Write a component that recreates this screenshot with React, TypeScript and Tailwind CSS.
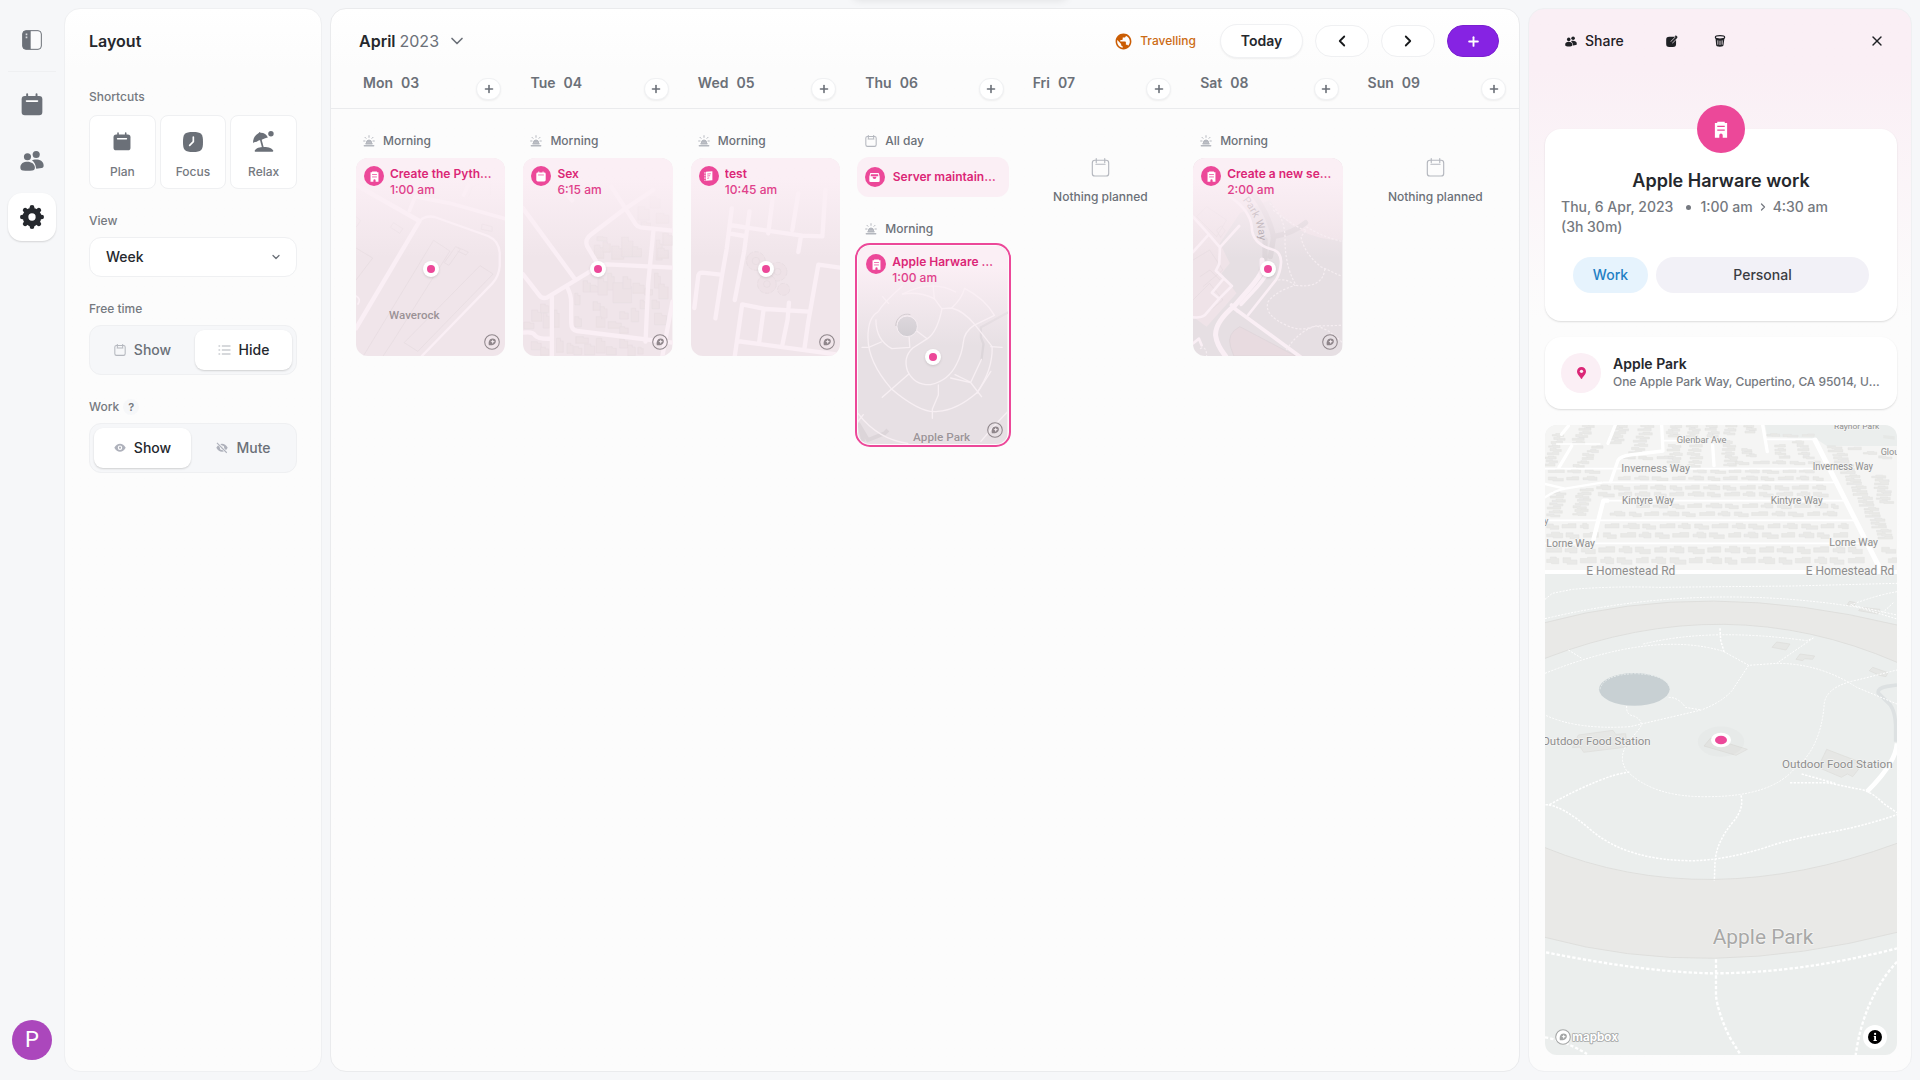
import type { ReactNode, SVGProps } from "react";
import { ChevronDown, ChevronLeft, ChevronRight, Plus, X } from "lucide-react";
import { MdPublic } from "react-icons/md";

type IconProps = SVGProps<SVGSVGElement>;

function CalendarSolid({ notch = "#fff", ...p }: IconProps & { notch?: string }) {
  return (
    <svg viewBox="62 279 68 69" fill="currentColor" {...p}>
      <rect x="64" y="287" width="64" height="60" rx="10" />
      <path d="M81 282v8M110 282v8" stroke="currentColor" strokeWidth="6" strokeLinecap="round" />
      <path d="M79 303h34" stroke={notch} strokeWidth="5" strokeLinecap="round" />
    </svg>
  );
}

function CalendarOutline({ thin = false, ...p }: IconProps & { thin?: boolean }) {
  return (
    <svg viewBox="152 471 56 58" fill="none" stroke="currentColor" strokeWidth={thin ? 5 : 3.5} strokeLinecap="round" {...p}>
      <rect x="155" y="478" width="50" height="48" rx="8" />
      <path d="M167 473v12M193 473v12M166 490h28" />
    </svg>
  );
}

function PeopleIcon(p: IconProps) {
  return (
    <svg viewBox="59 448 74 68" fill="currentColor" {...p}>
      <circle cx="82" cy="469" r="11" />
      <circle cx="109" cy="462" r="11" />
      <path d="M60 502c0-13 10-18 22-18s23 7 23 18c0 7-3 8-8 9-9 2-20 2-29 0-5-1-8-2-8-9z" />
      <path d="M96 480c7-4 36-6 36 17 0 4-2 6-6 7l-17 2c-2-14-6-20-13-26z" />
    </svg>
  );
}

function GearIcon(p: IconProps) {
  return (
    <svg viewBox="-36 -36 72 72" {...p}>
      {[0, 45, 90, 135].map((a) => (
        <line key={a} x1="-29" y1="0" x2="29" y2="0" transform={`rotate(${a})`} stroke="currentColor" strokeWidth="14" strokeLinecap="round" />
      ))}
      <circle r="28" fill="currentColor" />
      <circle r="11" fill="#fff" />
    </svg>
  );
}

function SidebarIcon(p: IconProps) {
  return (
    <svg viewBox="66 90 60 60" {...p}>
      <rect x="68" y="92" width="56" height="56" rx="10" fill="#fbfbfc" stroke="#6b7078" strokeWidth="3" />
      <path d="M78 92h14v56H78a10 10 0 0 1-10-10V102a10 10 0 0 1 10-10z" fill="#6b7078" />
      <path d="M77 103h5M77 112h5" stroke="#d9dbde" strokeWidth="5" />
    </svg>
  );
}

function FocusIcon(p: IconProps) {
  return (
    <svg viewBox="549 396 60 60" {...p}>
      <path d="M579 396c25 0 30 5 30 30s-5 30-30 30-30-5-30-30 5-30 30-30z" fill="currentColor" />
      <path d="M580 411v14l-11 11" fill="none" stroke="#fff" strokeWidth="5" strokeLinecap="round" />
    </svg>
  );
}

function BeachIcon(p: IconProps) {
  return (
    <svg viewBox="762 395 62 62" fill="currentColor" {...p}>
      <circle cx="815" cy="403" r="8" />
      <path d="M762 431c0-16 8-25 17-30l2-3 4 2c10 0 17 6 21 14-5 0-7 3-10 3l-12 5c-6 0-8 2-11 5-5 0-8 1-11 4z" />
      <path d="M784 417l7 26" stroke="currentColor" strokeWidth="5" />
      <path d="M767 453c4-8 15-11 27-11 15 0 25 4 28 11 0 2-1 3-3 3h-49c-2 0-4-1-3-3z" />
    </svg>
  );
}

function SunriseIcon(p: IconProps) {
  return (
    <svg viewBox="99 404 36 36" stroke="currentColor" strokeWidth="3" strokeLinecap="round" fill="currentColor" {...p}>
      <path d="M109 427a8 8 0 0 1 16 0z" />
      <path d="M108 430h18M103 436h28" strokeWidth="4.500" />
      <path d="M117 406v5M105 411l3 3M129 411l-3 3M101 422h4M129 422h4" />
    </svg>
  );
}

function BuildingIcon({ line = "#ec4899", ...p }: IconProps & { line?: string }) {
  return (
    <svg viewBox="583 362 40 50" {...p}>
      <path d="M585 368h7v-4h22v4h7v43h-13v-7a5 5 0 0 0-10 0v7h-13z" fill="#fff" />
      <path d="M592 378h22M592 389h22" stroke={line} strokeWidth="3.500" />
    </svg>
  );
}

function NoteIcon(p: IconProps) {
  return (
    <svg viewBox="1120 510 34 36" {...p}>
      <path d="M1129 515l20-2v28l-20 2z" fill="#fff" />
      <path d="M1126 516v27" stroke="#fff" strokeWidth="3" strokeDasharray="5 3" />
      <path d="M1133 522l11-1M1133 528l9-1M1133 535l6-1" stroke="#ec4899" strokeWidth="2.500" />
    </svg>
  );
}

function InboxIcon(p: IconProps) {
  return (
    <svg viewBox="88 245 34 34" {...p}>
      <path d="M92 248h26l3 12v12a4 4 0 0 1-4 4H93a4 4 0 0 1-4-4v-12z" fill="#fff" />
      <path d="M94 252h22l1 6H93z" fill="#ec4899" />
      <path d="M99 260a6 7 0 0 0 12 0z" fill="#ec4899" />
    </svg>
  );
}

function EyeIcon({ off = false, ...p }: IconProps & { off?: boolean }) {
  return (
    <svg viewBox="341 728 38 34" {...p}>
      <path d="M342 744c9-17 27-17 36 0-9 17-27 17-36 0z" fill="currentColor" />
      <circle cx="360" cy="744" r="7" fill="#fff" />
      <circle cx="360" cy="744" r="3.500" fill="currentColor" />
      {off && (
        <>
          <path d="M348 731l28 30" stroke="#f6f7f9" strokeWidth="8" />
          <path d="M344 729l31 31" stroke="currentColor" strokeWidth="3.500" />
        </>
      )}
    </svg>
  );
}

function ListIcon(p: IconProps) {
  return (
    <svg viewBox="653 432 38 36" stroke="currentColor" strokeWidth="3.500" {...p}>
      <path d="M654 438h5M664 438h26M654 450h5M664 450h26M654 462h5M664 462h26" />
    </svg>
  );
}

function EditIcon(p: IconProps) {
  return (
    <svg viewBox="440 106 33 34" {...p}>
      <path d="M449 111h19v20c0 7-2 9-9 9h-10c-7 0-9-2-9-9v-11c0-7 2-9 9-9z" fill="#1f2125" />
      <path d="M455 127l14-14" stroke="#faeff5" strokeWidth="8" />
      <path d="M454 128l16-16" stroke="#1f2125" strokeWidth="5" />
      <path d="M466 108l5 5" stroke="#1f2125" strokeWidth="4" />
    </svg>
  );
}

function TrashIcon(p: IconProps) {
  return (
    <svg viewBox="584 105 33 36" {...p}>
      <path d="M587 113h27l-3 22c0 3-3 5-11 5s-11-2-11-5z" fill="#1f2125" />
      <ellipse cx="600.500" cy="112" rx="14" ry="5" fill="#faeff5" stroke="#1f2125" strokeWidth="3.500" />
      <path d="M594 121v13M600.500 122v13M607 121v13" stroke="#faeff5" strokeWidth="2.500" />
    </svg>
  );
}

function MapboxMark({ color = "#8f868b", fill = "none", ...p }: IconProps & { color?: string; fill?: string }) {
  return (
    <svg viewBox="0 0 46 46" fill="none" {...p}>
      <circle cx="23" cy="23" r="21" fill={fill} stroke={color} strokeWidth="3" />
      <path d="M14 32c-2-9 1-19 11-19 9 0 12 9 6 15-4 4-10 5-17 4z" fill={color} />
      <path d="M25 15.500l2 4.500 4.500 2-4.500 2-2 4.500-2-4.500-4.500-2 4.500-2z" fill={fill === "none" ? "#f3eaee" : fill} />
    </svg>
  );
}

const road = "#faeff5";
const hair = "#e6dbe0";

function WaverockMap() {
  return (
    <svg viewBox="78 474 447 594" preserveAspectRatio="none" className="block h-full w-full" fill="none">
      <rect x="78" y="474" width="447" height="594" fill="#f0e5ea" />
      <g stroke={hair} strokeWidth="2">
        <path d="M310 721l49 32-170 270-30 45M310 721L100 1068" />
        <path d="M449 797l39 25-225 232-41-26z" />
        <path d="M376 740l14 8-34 48-14-8zM382 742l32 14-7 9-26-12M190 668l28 18-9 14-28-18zM455 672l30 8v14l-32-6zM78 744l50 30-50 66M78 650l14 12-14 20" />
        <path d="M415 590l12-30 18-6M480 545v40" />
      </g>
      <g stroke={road} strokeLinecap="round" strokeLinejoin="round">
        <path d="M78 555l190 108L78 985" strokeWidth="13" />
        <path d="M238 632l17-42 105 20 165 46" strokeWidth="11" />
        <path d="M400 585l14-30" strokeWidth="11" />
        <path d="M268 663q18-18 45-12l160 57q32 14 35 50v40q-3 32-22 52L275 1068" strokeWidth="7" />
        <path d="M78 888q16 8 6 24" strokeWidth="5" />
      </g>
      <text x="177" y="957" fontSize="33" textLength="151" lengthAdjust="spacingAndGlyphs" fontFamily="Roboto, sans-serif" fontWeight="500" fill="#9b9296">
        Waverock
      </text>
    </svg>
  );
}

function TuesdayMap() {
  const blocks = [
    [802, 710, 30, 12], [794, 735, 28, 40], [820, 725, 22, 32], [846, 738, 36, 40], [876, 712, 34, 58], [908, 740, 28, 30], [925, 620, 34, 40],
    [962, 590, 30, 34], [980, 640, 38, 30], [935, 665, 28, 20], [1000, 700, 28, 36], [980, 720, 18, 60], [985, 745, 32, 30], [760, 842, 22, 34],
    [782, 856, 28, 20], [805, 835, 28, 50], [834, 820, 20, 50], [850, 848, 56, 60], [880, 830, 24, 36], [910, 850, 34, 30], [735, 880, 16, 34],
    [790, 905, 22, 26], [812, 920, 20, 34], [870, 935, 26, 22], [905, 925, 22, 40], [932, 900, 16, 26], [945, 865, 24, 20], [975, 820, 18, 44],
    [988, 852, 28, 44], [968, 900, 22, 26], [975, 940, 36, 34], [800, 950, 26, 32], [835, 965, 40, 20], [735, 950, 20, 30], [870, 980, 26, 20],
    [605, 930, 30, 34], [632, 912, 24, 26], [640, 940, 18, 44], [582, 966, 30, 20], [672, 930, 16, 52], [604, 1025, 30, 24], [632, 1042, 24, 24],
    [680, 1015, 20, 42], [712, 1030, 18, 30], [738, 1010, 38, 20], [732, 1040, 24, 24], [765, 1032, 30, 32], [800, 1015, 26, 44], [830, 1040, 30, 24],
    [870, 1018, 24, 26], [895, 1035, 22, 32], [925, 1042, 16, 20],
  ];
  return (
    <svg viewBox="579 474 450 594" preserveAspectRatio="none" className="block h-full w-full" fill="none">
      <rect x="579" y="474" width="450" height="594" fill="#f0e5ea" />
      <g fill="#ede2e6" stroke="#e8dee2" strokeWidth="2">
        {blocks.map(([x, y, w, h], i) => (
          <path key={i} d={`M${x} ${y}h${w * 0.6}v${h * 0.2}h${w * 0.4}v${h * 0.8}h${-w}z`} />
        ))}
      </g>
      <g stroke={road} strokeWidth="13" strokeLinecap="round" strokeLinejoin="round">
        <path d="M579 625l154 209M579 823l50 64q8 10 22 6l152-92q10-8 30-8l196 10" />
        <path d="M803 790l-30-50q-10-20 10-36l98-74 90-60M845 560l74 114q4 6 14 8l96 10M972 690l-16 160-8 175" />
        <path d="M710 858q14 24 14 50v60q0 22 18 25l287 35M1029 905l-26 140-4 23M666 890v178M579 998q30-4 36 8 10 12 50 10M705 575l22 26" />
      </g>
    </svg>
  );
}

function WednesdayMap() {
  return (
    <svg viewBox="1083 474 447 594" preserveAspectRatio="none" className="block h-full w-full" fill="none">
      <rect x="1083" y="474" width="447" height="594" fill="#f0e5ea" />
      <g stroke={hair} strokeWidth="2" fill="#eee2e7">
        {[[1277, 783], [1342, 815], [1310, 852], [1360, 868]].map(([x, y], i) => (
          <circle key={i} cx={x} cy={y} r={i === 3 ? 18 : 28} strokeDasharray="14 4" />
        ))}
        <circle cx="1277" cy="783" r="11" />
        <circle cx="1310" cy="852" r="10" />
        <circle cx="1342" cy="815" r="10" />
      </g>
      <g stroke={road} strokeWidth="13" strokeLinecap="round" strokeLinejoin="round">
        <path d="M1205 625l-15 120-14 80-20 130M1258 634l-16 120-28 146M1200 675l50 8 166 24 60 2 9-139M1197 700l45 8M1328 590l-14 110M1404 580l-18 110M1412 708l-8 48" />
        <path d="M1093 924l12-98q2-8 12-8l55 6M1530 803l-66-9-30 170-12 84M1214 1068l22-155 70 14 130 8M1300 930l-13 96M1376 908l-4 50-16 78M1220 1023l310 42" />
      </g>
    </svg>
  );
}

function AppleParkMap() {
  return (
    <svg viewBox="54 468 450 594" preserveAspectRatio="none" className="block h-full w-full" fill="none">
      <rect x="54" y="468" width="450" height="594" fill="#e7e0e4" />
      <path d="M504 668l-80 44v30l8 20-6 46" stroke="#dcd6da" strokeWidth="7" strokeLinecap="round" />
      <path d="M54 1000l30 50 50-20 10-10M60 1010l10 45" stroke="#dcd5d9" strokeWidth="12" />
      <g stroke="#f7eff3" strokeWidth="4" strokeLinecap="round" strokeLinejoin="round">
        <path d="M188 612q50-8 96 14l22 30 30-2q38 10 70 50l52 66q2 70-46 138-60 52-118 56-50 8-140-68-70-80-70-154 0-60 30-76 18-30 74-78" />
        <path d="M188 612q90-46 160-6M375 595q60 30 90 81l-62 30q-30 20-32 52-4 34-20 64-24 50-78 62-50 2-70-42-14-40 16-68l44-28q30-20 44-90M375 595q-8 30-38 58M280 585l4 42M128 620l18 20" />
        <path d="M108 690q0 60 48 86l54-4-2-30M66 772h20l38-16M262 746l-30-22M207 852l-80 70M296 885v30l-18 42v28M346 854l46 22 34 44M333 864l60 14 33-70M412 910l42-66M454 770l34 2" />
        <path d="M54 970q60 78 150 90M504 966q-30 30-80 88M70 974l-16 20" />
      </g>
      <circle cx="202" cy="709" r="31" fill="#ccc9ce" stroke="#f4edf1" strokeWidth="3" />
      <path d="M168 708a34 34 0 0 1 44-34" stroke="#bdb8bc" strokeWidth="3" />
      <text x="220" y="1053" fontSize="34" textLength="172" lengthAdjust="spacingAndGlyphs" fontFamily="Roboto, sans-serif" fontWeight="500" fill="#9c9599" stroke="#efe8ec" strokeWidth="2" paintOrder="stroke">
        Apple Park
      </text>
    </svg>
  );
}

function ParkWayMap() {
  return (
    <svg viewBox="459 474 450 594" preserveAspectRatio="none" className="block h-full w-full" fill="none">
      <rect x="459" y="474" width="450" height="594" fill="#e6dfe3" />
      <path d="M459 474H909V720Q760 720 690 600L600 640 540 730 570 790 545 820 590 880 500 980 459 950z" fill="#efe3e8" />
      <path d="M600 980q-40 20-28 60l10 28h186z" fill="#e8dbe0" stroke="#ddd3d8" strokeWidth="2" />
      <g stroke={hair} strokeWidth="2">
        <path d="M470 650l30-30 60 40-30 50zM459 780l50-30 40 60-60 50M480 830l30-20 30 30M459 900l50-50 40 50-60 50M530 690l14-12 12 14-14 20z" />
      </g>
      <g stroke="#dcd5d9" strokeWidth="16" strokeLinecap="round" strokeLinejoin="round">
        <path d="M620 560q60 60 82 150l-10 60M676 720v55M700 710q60-10 98-42" />
      </g>
      <g stroke={road} strokeLinecap="round" strokeLinejoin="round">
        <path d="M570 590q60 40 66 90 0 50 60 68 30 8 28 40-2 30-14 50L625 945" strokeWidth="8" />
        <path d="M667 780v30q-6 20-40 58l-42 48q-60 50-58 90 4 30 30 62" strokeWidth="15" />
        <path d="M692 795q-8 30-40 66l-48 52M583 925l200 146M575 915l18 18" strokeWidth="11" />
        <path d="M459 650l45 50 36 42 58-64M540 742l-2 50-10 20 48 46-38 38-22-18 32-38M504 706l-45 50M538 896l-44 50q-10 8-35 6" strokeWidth="8" />
        <path d="M459 1030l18-14 8 20" strokeWidth="8" />
      </g>
      <g stroke="#f5edf1" strokeWidth="3.500" strokeDasharray="7 5">
        <path d="M690 610q50 40 46 120 4 80 34 126 80 10 86-50M700 630q80 60 100 60l-16 20q10 50 60 90l65 30M800 680q60 36 109 44M715 840q30-4 50 16-60 20-80 50-14 40 60 72 40 18 80 0l84-2M740 1050q40-60 90-72 40 10 79 50M480 1046q20-10 20 22" />
      </g>
      <path id="park-way" d="M608 600C636 636 662 676 658 735" />
      <text fontSize="31" fontFamily="Roboto, sans-serif" fill="#9c9398" textLength="134">
        <textPath href="#park-way" textLength="134">Park Way</textPath>
      </text>
    </svg>
  );
}

const houseRows: [number, number, number, number][] = [
  [143, 310, 460, 10], [158, 645, 910, 10], [184, 85, 255, 11], [184, 520, 910, 11], [206, 85, 245, 12], [205, 295, 910, 12],
  [233, 230, 930, 14], [253, 235, 950, 14], [288, 350, 955, 14], [312, 270, 980, 14], [349, 80, 205, 16], [349, 255, 985, 16],
  [376, 80, 235, 17], [376, 250, 1000, 17], [420, 80, 1035, 20], [452, 80, 1035, 20], [420, 1085, 1130, 18], [452, 1105, 1130, 18], [76, 740, 890, 8],
];

const houseStacks: [number, number, number, number, number][] = [
  [118, 75, 88, 165, 34], [205, 48, 172, 98, 36], [228, 112, 180, 168, 34], [306, 48, 284, 98, 40], [382, 48, 350, 128, 40],
  [464, 50, 458, 78, 34], [520, 48, 520, 78, 34], [575, 48, 578, 78, 34], [630, 48, 632, 70, 34], [690, 48, 690, 66, 30],
  [464, 108, 464, 168, 38], [524, 108, 526, 168, 38], [622, 96, 634, 164, 38], [680, 120, 690, 136, 30], [776, 108, 790, 142, 32],
  [838, 96, 862, 142, 34], [944, 112, 1100, 384, 44], [1000, 116, 1100, 142, 40], [1080, 200, 1096, 276, 42], [118, 250, 100, 316, 40], [196, 240, 178, 312, 40],
];

function house(x: number, y: number, w: number, h: number, k: number) {
  const a = h * 0.35;
  const top = y - h / 2;
  if (k % 3 === 0) return `M${x} ${top + a}h${w * 0.3}v${-a}h${w * 0.5}v${a * 0.6}h${w * 0.2}v${h - a * 0.6}h${-w * 0.6}v${-a * 0.5}h${-w * 0.4}z`;
  if (k % 3 === 1) return `M${x} ${top}h${w * 0.55}v${a}h${w * 0.45}v${h - a}h${-w * 0.7}v${-a * 0.7}h${-w * 0.3}z`;
  return `M${x} ${top + a * 0.5}h${w * 0.45}v${-a * 0.5}h${w * 0.55}v${h - a * 0.5}h${-w}z`;
}

function DetailMap() {
  const paths: string[] = [];
  houseRows.forEach(([y, x0, x1, h], r) => {
    let x = x0;
    let k = r;
    while (x < x1 - 20) {
      const w = 36 + ((k * 7) % 5) * 3;
      paths.push(house(x, y + ((k * 5) % 3) - 1, Math.min(w, x1 - x), h, k));
      x += w + 10 + (k % 2) * 3;
      k += 1;
    }
  });
  houseStacks.forEach(([x0, y0, x1, y1, w], r) => {
    const n = Math.max(2, Math.round((y1 - y0) / 11));
    for (let i = 0; i <= n; i++) {
      const t = i / n;
      const shift = ((i * 5 + r) % 3) * 4 - 4;
      paths.push(house(x0 + (x1 - x0) * t - w / 2 + shift, y0 + (y1 - y0) * t, w, 9, i + r));
    }
  });
  const labels: [string, number, number, number, number][] = [
    ["Raynor Park", 942, 57, 136, 23], ["Glenbar Ave", 470, 100, 149, 28], ["Glou", 1082, 135, 56, 28], ["Inverness Way", 304, 185, 206, 33],
    ["Inverness Way", 878, 180, 181, 31], ["Kintyre Way", 306, 282, 156, 31], ["Kintyre Way", 752, 282, 156, 31], ["Lorne Way", 79, 411, 146, 32],
    ["Lorne Way", 928, 408, 146, 32], ["E Homestead Rd", 199, 496, 267, 39], ["E Homestead Rd", 857, 494, 266, 39],
    ["Outdoor Food Station", 66, 1005, 326, 35], ["Outdoor Food Station", 786, 1075, 332, 35],
  ];
  return (
    <svg viewBox="75 45 1056 1890" preserveAspectRatio="none" className="block h-full w-full" fill="none">
      <rect x="75" y="45" width="1056" height="1890" fill="#ebeeed" />
      <path d="M75 45H735L742 80 885 84 920 108H1131V485H75z" fill="#f5f5f4" />
      <path d={paths.join("")} fill="#e9e9e7" stroke="#e2e2e0" strokeWidth="1.500" />
      <path d="M1090 75l34 4v10l-34-4z" fill="#e6e8e6" />
      <g stroke="#fff" strokeLinecap="round" strokeLinejoin="round">
        <path d="M75 176H920M250 217H940M250 272H968M75 331H1000M75 400H1040M740 88h145M110 102h130M430 92h50" strokeWidth="5" />
        <path d="M75 222l60 14 110-18M75 262q30-20 60-26" strokeWidth="7" />
        <path d="M145 48l-20 25M155 108l-38 64M286 45l-22 55M425 45l4 78-100 12q-28 4-35 16l-22 64M578 105l4 62M728 45l14 80" strokeWidth="10" />
        <path d="M262 272h-12l-30 118" strokeWidth="13" />
        <path d="M885 90l194 384" strokeWidth="15" />
        <path d="M75 486H1131" strokeWidth="12" />
      </g>
      <path d="M75 638Q560 505 1131 645V757Q620 535 75 745z" fill="#e9e9e7" />
      <path d="M75 1313Q560 1510 1131 1300V1567Q560 1715 75 1582z" fill="#e9e9e7" />
      <path d="M75 638Q560 505 1131 645M1131 757Q620 535 75 745M75 1313Q560 1510 1131 1300M75 1582Q560 1715 1131 1567" stroke="#dcdcda" strokeWidth="2.500" />
      <path d="M770 696l40 6-12 18-42-8zM840 732l44 6-6 10-24-2-6 6-20-4zM1058 772l46 16-6 12-20-4-30-14zM988 574l20 4-6 10-20-4zM1024 592l56 6-6 14-58-10zM175 975l104-14 8 12 30-2 4 40-130 16-10-16-24 2zM572 984l110 34-34 18-96-28zM920 1018l110 42-32 40-16-8-18 10-70-30z" fill="#e6e7e5" stroke="#dcddda" strokeWidth="2" />
      <path d="M1131 825l-30 4q-30 6-26 20l36 36q14 20 16 60v50" stroke="#dde1e2" strokeWidth="11" />
      <g stroke="#fff" strokeWidth="3" strokeDasharray="6 4" strokeLinejoin="round">
        <path d="M75 568l22-18 60-12q120-10 260-6l400-4 314-8M75 626q460-110 940-34l116 35M1131 545q-60 10-140 40l140 30M1120 578l-32 30" />
        <path d="M75 790Q400 660 610 724l76 42 84-6q130 0 240 72l121 50M370 702q200-50 490-10l20-8M880 684l-110 76M145 720l42 26" />
        <path d="M686 766l-50 76q-30 34-92 58l-214 50q-160 10-255-35M446 862q30 0 50 30l48 8M320 888q-2 28 22 30 30 14 18 36l-30 36q-40 50-10 92 80 82 250 78 180-2 250-80 80-60 92-190 0-60 100-80l119-30" />
      </g>
      <g stroke="#fff" strokeWidth="4.500" strokeDasharray="7 4" strokeLinejoin="round">
        <path d="M600 655l2 36 10 34M328 1086q-80 10-240 98H75q50 0 140 78 110 92 310 90 100-4 220-42 60-22 200-46 100-20 186-50M663 1156q10 40-24 80-50 60-54 120l-2 56M810 1118h110l110 22q30 10 60 40l41 28M845 1092l100 28" />
      </g>
      <g stroke="#fff" strokeWidth="7" strokeDasharray="10 6" strokeLinejoin="round">
        <path d="M78 1627q300 60 500 63 260 0 553-75M588 1648v110q6 50 40 122l34 55M1131 1655q-100 110-124 280M75 1882q60 10 126 50" />
      </g>
      <path d="M1131 1000q-4 60-90 145" stroke="#fff" strokeWidth="14" />
      <ellipse cx="343" cy="838" rx="106" ry="49" fill="#c8d0d3" />
      <path d="M240 838q10-44 104-47 90 2 104 40" stroke="#e8eded" strokeWidth="3" strokeDasharray="6 4" />
      <g fontFamily="Roboto, sans-serif" fill="#8e8e8e" stroke="#f5f5f4" strokeWidth="4" paintOrder="stroke" strokeLinejoin="round">
        {labels.map(([t, x, y, w, s], i) => (
          <text key={i} x={x} y={y} fontSize={s} textLength={w} lengthAdjust="spacingAndGlyphs">
            {t}
          </text>
        ))}
        <text x="79" y="342" fontSize="28" textAnchor="middle">y</text>
        <text x="578" y="1601" fontSize="60" textLength="302" lengthAdjust="spacingAndGlyphs" fill="#a8a8a7">
          Apple Park
        </text>
      </g>
      <ellipse cx="603" cy="995" rx="70" ry="46" fill="#000" opacity="0.015" />
      <ellipse cx="603" cy="990" rx="30" ry="22" fill="#fff" />
      <ellipse cx="603" cy="990" rx="18" ry="13" fill="#ec4899" />
      <text x="157" y="1892" fontSize="36" textLength="137" lengthAdjust="spacingAndGlyphs" fontFamily="Inter, sans-serif" fontWeight="700" fill="#fff" stroke="#a4a6a6" strokeWidth="5" paintOrder="stroke" strokeLinejoin="round">
        mapbox
      </text>
    </svg>
  );
}

function GroupLabel({ allDay = false }: { allDay?: boolean }) {
  return (
    <div className="flex h-4 items-center gap-2 pl-[7px] text-xs font-medium text-[#6b7078]">
      {allDay ? <CalendarOutline thin className="h-3 w-3 text-[#b4b7be]" /> : <SunriseIcon className="h-3 w-3 text-[#b4b7be]" />}
      {allDay ? "All day" : "Morning"}
    </div>
  );
}

type EventCardProps = { title: string; time: string; icon: ReactNode; map: ReactNode; selected?: boolean };

function EventCard({ title, time, icon, map, selected = false }: EventCardProps) {
  return (
    <div
      className={
        selected
          ? "relative h-[198px] overflow-hidden rounded-xl outline-2 outline-offset-1 outline-[#ec4899]"
          : "relative h-[198px] overflow-hidden rounded-xl"
      }
    >
      <div className="absolute inset-0">{map}</div>
      <div className="absolute inset-x-0 top-0 h-[100px] bg-linear-to-b from-[#fbeff5] from-20% to-[#fbeff5]/0" />
      <div className="relative flex gap-1.5 p-2">
        <span className="flex size-5 shrink-0 items-center justify-center rounded-full bg-[#ec4899]">{icon}</span>
        <div className="min-w-0 text-xs leading-4 text-[#db2777]">
          <div className="truncate font-semibold">{title}</div>
          <div className="font-medium text-[#e0408a]">{time}</div>
        </div>
      </div>
      <span className="absolute top-1/2 left-1/2 mt-3 flex size-4 -translate-x-1/2 -translate-y-1/2 items-center justify-center rounded-full bg-white shadow-sm">
        <span className="size-2 rounded-full bg-[#ec4899]" />
      </span>
      <MapboxMark className="absolute right-[5px] bottom-[6px] size-4" />
    </div>
  );
}

function Empty() {
  return (
    <div className="flex flex-col items-center pt-[25px] text-xs font-medium text-[#6b7078]">
      <CalendarOutline className="h-[19px] w-[19px] text-[#b4b7be]" />
      <span className="mt-3 leading-4">Nothing planned</span>
    </div>
  );
}

const building = <BuildingIcon className="h-[11px] w-[9px]" />;

const days: { name: string; date: string; body: ReactNode }[] = [
  {
    name: "Mon", date: "03",
    body: (<><GroupLabel /><div className="h-[9px]" /><EventCard title="Create the Python script" time="1:00 am" icon={building} map={<WaverockMap />} /></>),
  },
  {
    name: "Tue", date: "04",
    body: (<><GroupLabel /><div className="h-[9px]" /><EventCard title="Sex" time="6:15 am" icon={<CalendarSolid notch="#ec4899" className="h-[11px] w-[10px] text-white" />} map={<TuesdayMap />} /></>),
  },
  {
    name: "Wed", date: "05",
    body: (<><GroupLabel /><div className="h-[9px]" /><EventCard title="test" time="10:45 am" icon={<NoteIcon className="h-3 w-[11px]" />} map={<WednesdayMap />} /></>),
  },
  {
    name: "Thu", date: "06",
    body: (
      <>
        <GroupLabel allDay />
        <div className="-mx-[1.5px] mt-2 flex h-10 items-center gap-2 rounded-xl bg-[#fbeff5] px-2">
          <span className="flex size-5 shrink-0 items-center justify-center rounded-full bg-[#ec4899]"><InboxIcon className="size-[11px]" /></span>
          <span className="truncate text-xs font-semibold text-[#db2777]">Server maintainance</span>
        </div>
        <div className="h-6" />
        <GroupLabel />
        <div className="h-[9px]" />
        <EventCard selected title="Apple Harware work" time="1:00 am" icon={building} map={<AppleParkMap />} />
      </>
    ),
  },
  { name: "Fri", date: "07", body: <Empty /> },
  {
    name: "Sat", date: "08",
    body: (<><GroupLabel /><div className="h-[9px]" /><EventCard title="Create a new server" time="2:00 am" icon={building} map={<ParkWayMap />} /></>),
  },
  { name: "Sun", date: "09", body: <Empty /> },
];

function Rail() {
  return (
    <nav className="flex w-16 shrink-0 flex-col items-center">
      <div className="flex h-[72px] w-12 items-center justify-center border-b border-[#eff0f2] pt-2">
        <SidebarIcon className="size-5" />
      </div>
      <div className="mt-1 flex h-14 items-center text-[#6b7078]"><CalendarSolid className="h-[23px] w-[22px]" /></div>
      <div className="mt-px flex h-14 items-center text-[#6b7078]"><PeopleIcon className="h-[22px] w-6" /></div>
      <div className="mt-1 flex size-12 items-center justify-center rounded-[14px] bg-white text-[#25282d] shadow-[0_1px_2px_rgba(0,0,0,0.14)]">
        <GearIcon className="size-6" />
      </div>
      <div className="mt-auto mb-5 flex size-10 items-center justify-center rounded-full bg-[#ab47bc] font-['Roboto',sans-serif] text-[22px] leading-none text-white">P</div>
    </nav>
  );
}

function Toggle({ children, active = false }: { children: ReactNode; active?: boolean }) {
  return (
    <div
      className={
        active
          ? "flex flex-1 items-center justify-center gap-2 rounded-[9px] bg-white text-[#25282d] shadow-[0_1px_2px_rgba(0,0,0,0.16)]"
          : "flex flex-1 items-center justify-center gap-2 text-[#6b7078]"
      }
    >
      {children}
    </div>
  );
}

function LayoutPanel() {
  const group = "flex h-[50px] gap-1 rounded-xl border border-[#eff0f2] bg-[#f6f7f9] p-1 text-sm font-medium";
  const label = "text-xs leading-4 font-medium text-[#757980]";
  return (
    <aside className="w-[258px] shrink-0 rounded-2xl border border-[#eff0f2] bg-linear-to-b from-white to-[#fcfcfc] to-[60px] px-6 pt-5">
      <h1 className="text-base leading-6 font-semibold text-[#25282d]">Layout</h1>
      <div className={`mt-9 ${label}`}>Shortcuts</div>
      <div className="mt-[10px] grid grid-cols-3 gap-1 text-xs font-medium text-[#757980]">
        {[
          ["Plan", <CalendarSolid key="i" className="h-[19px] w-[18px] text-[#6b7078]" />],
          ["Focus", <FocusIcon key="i" className="size-5 text-[#6b7078]" />],
          ["Relax", <BeachIcon key="i" className="size-[21px] text-[#6b7078]" />],
        ].map(([name, icon]) => (
          <div key={name as string} className="flex h-[74px] flex-col items-center rounded-lg border border-[#eff0f2] bg-white pt-[15px]">
            <span className="flex h-[21px] items-center">{icon}</span>
            <span className="mt-3 leading-4">{name}</span>
          </div>
        ))}
      </div>
      <div className={`mt-6 ${label}`}>View</div>
      <div className="mt-2 flex h-10 items-center justify-between rounded-xl border border-[#eff0f2] bg-white pr-[14px] pl-4 text-sm font-medium text-[#25282d]">
        Week
        <ChevronDown className="h-3 w-3 text-[#6b7078]" strokeWidth={2.600} />
      </div>
      <div className={`mt-6 ${label}`}>Free time</div>
      <div className={`mt-2 ${group}`}>
        <Toggle><CalendarOutline thin className="h-3 w-3 text-[#b4b7be]" />Show</Toggle>
        <Toggle active><ListIcon className="h-3 w-[13px] text-[#b0b3ba]" />Hide</Toggle>
      </div>
      <div className={`mt-6 flex items-center gap-1 ${label}`}>
        Work
        <span className="flex size-4 items-center justify-center rounded-full bg-[#f6f7f9] text-[11px] font-semibold">?</span>
      </div>
      <div className={`mt-2 ${group}`}>
        <Toggle active><EyeIcon className="h-3 w-3 text-[#aeb1bb]" />Show</Toggle>
        <Toggle><EyeIcon off className="h-3 w-3 text-[#aeb1bb]" />Mute</Toggle>
      </div>
    </aside>
  );
}

function Calendar() {
  const pill = "flex h-8 w-[54px] items-center justify-center rounded-full border border-[#eff0f2] bg-white text-[#17191c]";
  return (
    <main className="flex w-[1190px] shrink-0 flex-col rounded-2xl border border-[#eaebed] bg-linear-to-b from-white to-[#fcfcfc] to-[60px]">
      <header className="flex h-16 items-center pr-[20px] pl-7">
        <div className="flex items-center text-base text-[#6b7078]">
          <span className="font-semibold text-[#25282d]">April</span>
          <span className="ml-1">2023</span>
          <ChevronDown className="ml-2 size-5" strokeWidth={2} />
        </div>
        <div className="ml-auto flex items-center gap-3">
          <div className="mr-3 flex items-center gap-[7px] text-xs font-medium text-[#cc6b14]">
            <MdPublic className="size-[19px] text-[#cb5d04]" />
            Travelling
          </div>
          <div className="flex h-[34px] w-[83px] items-center justify-center rounded-full border border-[#f0f1f3] bg-white text-sm font-semibold text-[#25282d] shadow-[0_1px_2px_rgba(0,0,0,0.06)]">Today</div>
          <div className={pill}><ChevronLeft className="size-[18px]" strokeWidth={2.400} /></div>
          <div className={pill}><ChevronRight className="size-[18px]" strokeWidth={2.400} /></div>
          <div className="flex h-8 w-[52px] items-center justify-center rounded-full border border-[#7a1fd0] bg-[#8623e3] text-white"><Plus className="size-[15px]" strokeWidth={3} /></div>
        </div>
      </header>
      <div className="grid h-9 grid-cols-7 border-b border-[#eaebed] pl-4 text-sm font-semibold text-[#6b7078]">
        {days.map((d) => (
          <div key={d.name} className="flex justify-between pr-[13px] pl-4">
            <div className="flex h-5 gap-2 leading-5"><span>{d.name}</span><span>{d.date}</span></div>
            <span className="mt-[5px] flex h-[22px] w-[25px] items-center justify-center rounded-full border border-[#f0f1f3] bg-white shadow-[0_1px_2px_rgba(0,0,0,0.06)]">
              <Plus className="size-3" strokeWidth={3.200} />
            </span>
          </div>
        ))}
      </div>
      <div className="grid grid-cols-7 pt-6 pl-4">
        {days.map((d) => (
          <div key={d.name} className="min-w-0 px-[9px]">{d.body}</div>
        ))}
      </div>
    </main>
  );
}

function DetailPanel() {
  const card = "rounded-2xl bg-white shadow-[0_1px_2px_rgba(0,0,0,0.13)]";
  return (
    <aside className="flex w-[384px] shrink-0 flex-col rounded-2xl border border-[#eff0f2] bg-linear-to-b from-[#faeff5] from-[60px] to-[#fcfcfc] to-[310px] pr-[14px] pb-4 pl-4">
      <div className="flex h-16 shrink-0 items-center pl-5 text-[#1f2125]">
        <PeopleIcon className="h-[11px] w-3" />
        <span className="ml-2 text-sm font-medium">Share</span>
        <EditIcon className="ml-[42px] size-3" />
        <TrashIcon className="ml-9 h-3 w-3" />
        <X className="mr-3 ml-auto size-4" strokeWidth={2} />
      </div>
      <section className={`mt-14 flex h-48 shrink-0 flex-col px-4 ${card}`}>
        <span className="-mt-6 flex size-12 shrink-0 items-center justify-center self-center rounded-full bg-[#ec4899]"><BuildingIcon className="h-[17px] w-[14px]" /></span>
        <h2 className="mt-3.5 text-center text-lg leading-7 font-semibold text-[#25282d]">Apple Harware work</h2>
        <p className="mt-0.5 flex flex-wrap items-center text-sm leading-5 font-medium text-[#757980]">
          Thu, 6 Apr, 2023
          <span className="mr-[9px] ml-[13px] size-[5px] rounded-full bg-[#757980]" />
          1:00 am
          <ChevronRight className="mx-1 size-3" strokeWidth={2.500} />
          4:30 am
          <span className="w-full">(3h 30m)</span>
        </p>
        <div className="mt-5 flex h-9 gap-2 px-3 text-sm font-medium">
          <span className="flex w-[75px] items-center justify-center rounded-full bg-[#e6f3fd] text-[#1f7fc4]">Work</span>
          <span className="flex w-[213px] items-center justify-center rounded-full bg-[#f2f1f7] text-[#3a3c42]">Personal</span>
        </div>
      </section>
      <section className={`mt-4 flex h-[72px] shrink-0 items-center gap-3 px-4 ${card}`}>
        <span className="flex size-10 shrink-0 items-center justify-center rounded-full bg-[#fbeff5]">
          <svg viewBox="0 0 27 36" className="h-3 w-[9px]">
            <path d="M13.500 0C6 0 0 6 0 13.500 0 23 9 28 11 34q2.500 4 5 0c2-6 11-11 11-20.500C27 6 21 0 13.500 0z" fill="#db2777" />
            <circle cx="13.500" cy="13" r="5" fill="#fbeff5" />
          </svg>
        </span>
        <div className="-mt-[3px] min-w-0">
          <div className="text-sm leading-5 font-semibold text-[#25282d]">Apple Park</div>
          <div className="-mr-1 truncate text-xs leading-4 font-medium tracking-[-0.005em] text-[#757980]">One Apple Park Way, Cupertino, CA 95014, United States</div>
        </div>
      </section>
      <div className="relative mt-4 min-h-0 flex-1 overflow-hidden rounded-xl">
        <DetailMap />
        <MapboxMark color="#a4a6a6" fill="#fff" className="absolute bottom-[10px] left-[10px] size-4" />
        <span className="absolute right-[10px] bottom-[6px] flex size-6 items-center justify-center rounded-full bg-white">
          <svg viewBox="0 0 14 14" className="size-3.5">
            <circle cx="7" cy="7" r="7" fill="#000" />
            <path d="M5.800 6H8v4h.8v1H5.500v-1h.7V7h-.4z" fill="#fff" />
            <circle cx="7.100" cy="3.900" r="1.100" fill="#fff" />
          </svg>
        </span>
      </div>
    </aside>
  );
}

export default function App() {
  return (
    <div className="relative flex h-[1080px] w-[1920px] overflow-hidden bg-[#f6f7f9] font-['Inter',sans-serif] antialiased">
      <div className="absolute -top-10 left-[852px] h-10 w-[216px] rounded-lg shadow-[0_0_8px_rgba(0,0,0,0.1)]" />
      <Rail />
      <div className="flex gap-2 pt-2 pb-2">
        <LayoutPanel />
        <Calendar />
        <DetailPanel />
      </div>
    </div>
  );
}
